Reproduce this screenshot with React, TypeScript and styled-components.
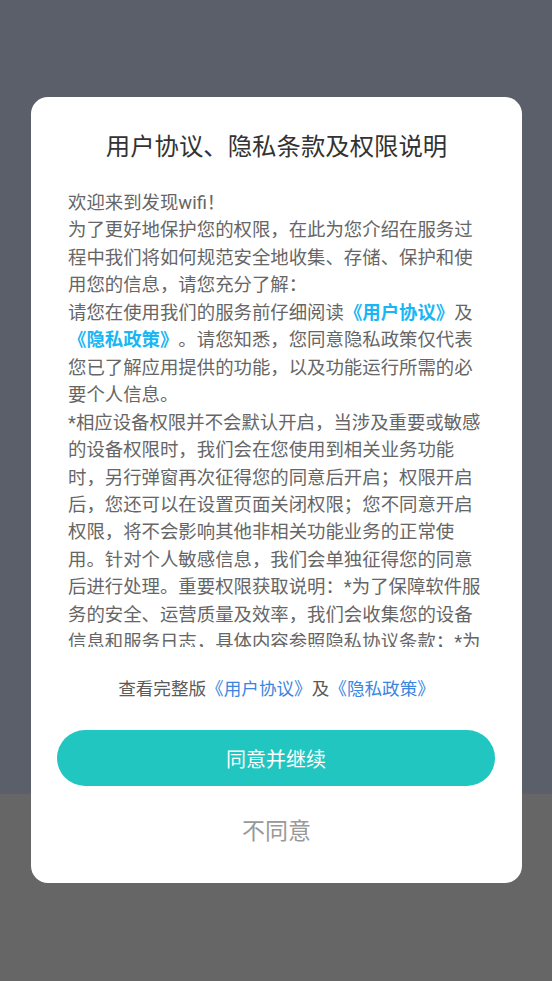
import React from 'react';
import styled, { createGlobalStyle } from 'styled-components';

const GlobalStyle = createGlobalStyle`
  html, body {
    margin: 0;
    padding: 0;
  }
  body {
    font-family: Roboto, "Noto Sans CJK SC", sans-serif;
    text-spacing-trim: space-all;
  }
`;

const Page = styled.div`
  width: 552px;
  height: 981px;
  box-sizing: border-box;
  padding: 97px 30px 0 31px;
  background: linear-gradient(#5b5f69 0, #5b5f69 794px, #666666 794px, #666666 100%);
`;

const Dialog = styled.div`
  background: #ffffff;
  border-radius: 17px;
  height: 786px;
  box-sizing: border-box;
  padding: 33px 0 0;
  display: flex;
  flex-direction: column;
`;

const Title = styled.h1`
  margin: 0;
  font-size: 24.4px;
  line-height: 34px;
  font-weight: 400;
  color: #333333;
  text-align: center;
`;

const Body = styled.div`
  margin: 25px 37px 0;
  height: 458px;
  overflow: hidden;
  font-size: 18.4px;
  line-height: 27.45px;
  color: #666666;
  line-break: strict;
  text-spacing-trim: space-all;
`;

const Para = styled.p`
  margin: 0;
`;

const Link = styled.span<{ $tone?: 'cyan' | 'blue' }>`
  color: ${p => (p.$tone === 'blue' ? '#3a86df' : '#19b6f4')};
  font-weight: ${p => (p.$tone === 'blue' ? 400 : 700)};
`;

const Footer = styled.div`
  margin-top: 30px;
  font-size: 17.6px;
  line-height: 24px;
  color: #5a5a5a;
  text-align: center;
  text-spacing-trim: space-all;
`;

const AgreeButton = styled.button`
  margin: 29px 27px 0 26px;
  height: 56px;
  border: none;
  border-radius: 28px;
  background: #22c6c0;
  color: #ffffff;
  font-family: inherit;
  font-size: 20px;
  cursor: pointer;
`;

const RejectButton = styled.button`
  margin-top: 30px;
  height: 32px;
  border: none;
  background: transparent;
  color: #999999;
  font-family: inherit;
  font-size: 23px;
  line-height: 32px;
  padding: 0;
  cursor: pointer;
`;

export default function App() {
  return (
    <>
      <GlobalStyle />
      <Page>
        <Dialog>
          <Title>用户协议、隐私条款及权限说明</Title>
          <Body>
            <Para>欢迎来到发现wifi！</Para>
            <Para>
              为了更好地保护您的权限，在此为您介绍在服务过程中我们将如何规范安全地收集、存储、保护和使用您的信息，请您充分了解：
            </Para>
            <Para>
              请您在使用我们的服务前仔细阅读<Link>《用户协议》</Link>及<Link>《隐私政策》</Link>。请您知悉，您同意隐私政策仅代表您已了解应用提供的功能，以及功能运行所需的必要个人信息。
            </Para>
            <Para>
              *相应设备权限并不会默认开启，当涉及重要或敏感的设备权限时，我们会在您使用到相关业务功能时，另行弹窗再次征得您的同意后开启；权限开启后，您还可以在设置页面关闭权限；您不同意开启权限，将不会影响其他非相关功能业务的正常使用。针对个人敏感信息，我们会单独征得您的同意后进行处理。重要权限获取说明：*为了保障软件服务的安全、运营质量及效率，我们会收集您的设备信息和服务日志，具体内容参照隐私协议条款；*为了向您提供与位置相关的网络服务，我们会申请位置权限。
            </Para>
          </Body>
          <Footer>
            查看完整版<Link $tone="blue">《用户协议》</Link>及<Link $tone="blue">《隐私政策》</Link>
          </Footer>
          <AgreeButton>同意并继续</AgreeButton>
          <RejectButton>不同意</RejectButton>
        </Dialog>
      </Page>
    </>
  );
}
